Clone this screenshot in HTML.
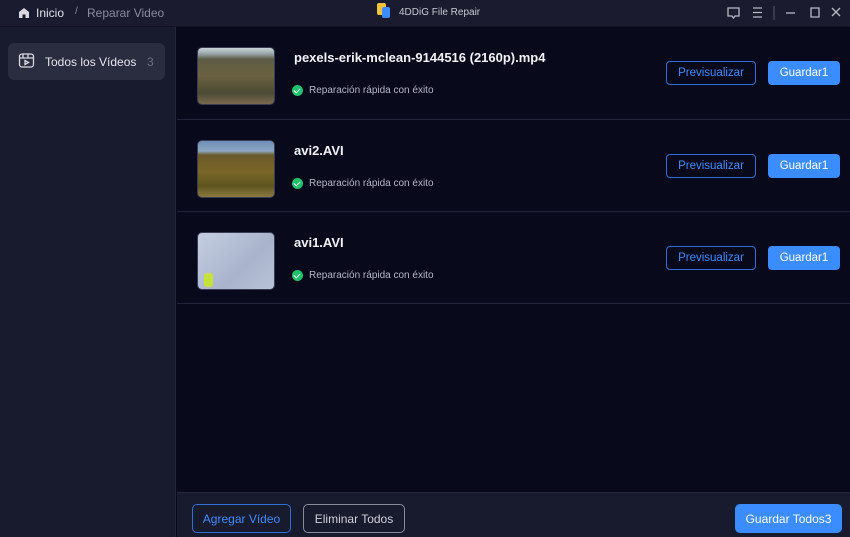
<!DOCTYPE html>
<html><head><meta charset="utf-8"><style>
*{margin:0;padding:0;box-sizing:border-box}
body{width:850px;height:537px;background:#080a1c;font-family:"Liberation Sans",sans-serif;overflow:hidden;position:relative;color:#fff}
.top{position:absolute;left:0;top:0;width:850px;height:27px;background:#1a1b2e;border-bottom:1px solid #101222}
.side{position:absolute;left:0;top:27px;width:176px;height:510px;background:#181a2d;border-right:1px solid #23253a}
.sel{position:absolute;left:8px;top:43px;width:157px;height:37px;background:#2a2c40;border-radius:6px}
.row{position:absolute;left:177px;width:673px;height:92px;border-bottom:1px solid #22243a}
.th{position:absolute;left:20px;top:20px;width:78px;height:58px;border-radius:5px;border:1px solid #3a3d55}
.name{position:absolute;left:117px;top:23px;font-size:13px;font-weight:bold;color:#f2f2f5}
.ok{position:absolute;left:115px;top:58px;font-size:10px;color:#b5b7c5;display:flex;align-items:center}
.ok i{display:inline-block;width:11px;height:11px;border-radius:50%;background:#1fc26b;margin-right:6px;position:relative}
.ok i:after{content:"";position:absolute;left:3px;top:2px;width:3px;height:5px;border:solid #fff;border-width:0 1.5px 1.5px 0;transform:rotate(45deg)}
.pv,.gd{position:absolute;top:34px;height:24px;border-radius:4px;font-size:11.5px;display:flex;align-items:center;justify-content:center}
.pv{left:489px;width:90px;border:1px solid #2f6fd8;color:#3f8cff}
.gd{left:591px;width:72px;background:#3a8cff}
.bot{position:absolute;left:177px;top:492px;width:673px;height:45px;background:#181a2d;border-top:1px solid #25273c}
.b{position:absolute;top:11px;height:29px;border-radius:5px;font-size:12px;display:flex;align-items:center;justify-content:center}
</style></head><body>
<div class="top">
<svg style="position:absolute;left:18px;top:7px" width="12" height="12" viewBox="0 0 12 12"><path d="M1 5L6 1L11 5V11H7.5V7.5H4.5V11H1Z" fill="#d8d9e0"/></svg>
<span style="position:absolute;left:36px;top:6px;font-size:12px;color:#e0e1e8">Inicio</span>
<span style="position:absolute;left:75px;top:6px;font-size:10px;color:#8a8c9c">/</span>
<span style="position:absolute;left:87px;top:6px;font-size:12px;color:#8a8c9c">Reparar Video</span>
<div style="position:absolute;left:377px;top:3px;width:9px;height:12px;background:#f5c33b;border-radius:2px"></div>
<div style="position:absolute;left:382px;top:7px;width:8px;height:11px;background:#3a8cff;border-radius:2px"></div>
<span style="position:absolute;left:399px;top:7px;font-size:10px;color:#c8c9d2">4DDiG File Repair</span>
<svg style="position:absolute;left:726px;top:5px" width="120" height="16" viewBox="0 0 120 16" fill="none" stroke="#b8bac6" stroke-width="1.3"><path d="M2 3h11v8H9l-1.5 2L6 11H2z"/><path d="M5.5 7h.1M7.5 7h.1M9.5 7h.1"/><path d="M27 3h9M27 7.5h9M27 12h9"/><path d="M48 1v14" stroke="#4a4c5e"/><path d="M60 8h9"/><path d="M85 3h8v9h-8z"/><path d="M106 3l8 8M114 3l-8 8"/></svg>
</div>
<div class="side"></div>
<div class="sel"></div>
<svg style="position:absolute;left:18px;top:52px" width="17" height="17" viewBox="0 0 17 17" fill="none" stroke="#d8d9e0" stroke-width="1.3"><rect x="1.5" y="2" width="14" height="13" rx="2.5"/><path d="M1.5 6h14M5 2v4M10 2v4"/><path d="M7 8.5v4l3.5-2z"/></svg>
<span style="position:absolute;left:45px;top:55px;font-size:12px;color:#e4e5ec">Todos los Vídeos</span>
<span style="position:absolute;left:147px;top:55px;font-size:12px;color:#6c6e80">3</span>

<div class="row" style="top:27px;height:93px">
<div class="th" style="background:linear-gradient(#c8d4d8 0,#9aa8ac 10%,#5d5d45 20%,#6a6240 50%,#4b4a35 80%,#7a6a50)"></div>
<div class="name">pexels-erik-mclean-9144516 (2160p).mp4</div>
<div class="ok" style="top:58px"><i></i>Reparación rápida con éxito</div>
<div class="pv">Previsualizar</div><div class="gd">Guardar1</div>
</div>
<div class="row" style="top:120px">
<div class="th" style="background:linear-gradient(#6f8fb8 0,#8ea6c0 18%,#6a5a2a 25%,#7a6628 55%,#5e5520 80%,#8a7a40)"></div>
<div class="name">avi2.AVI</div>
<div class="ok"><i></i>Reparación rápida con éxito</div>
<div class="pv">Previsualizar</div><div class="gd">Guardar1</div>
</div>
<div class="row" style="top:212px">
<div class="th" style="background:linear-gradient(135deg,#c5cee0,#a9b4cc 60%,#b8c2d6)"><div style="position:absolute;left:6px;top:40px;width:9px;height:14px;background:#c8e03a;border-radius:3px"></div></div>
<div class="name">avi1.AVI</div>
<div class="ok"><i></i>Reparación rápida con éxito</div>
<div class="pv">Previsualizar</div><div class="gd">Guardar1</div>
</div>

<div class="bot">
<div class="b" style="left:15px;width:99px;border:1px solid #2f6fd8;color:#3f8cff">Agregar Vídeo</div>
<div class="b" style="left:126px;width:102px;border:1px solid #8a8c98;color:#d0d1d8">Eliminar Todos</div>
<div class="b" style="left:558px;width:107px;background:#3a8cff">Guardar Todos3</div>
</div>
</body></html>
